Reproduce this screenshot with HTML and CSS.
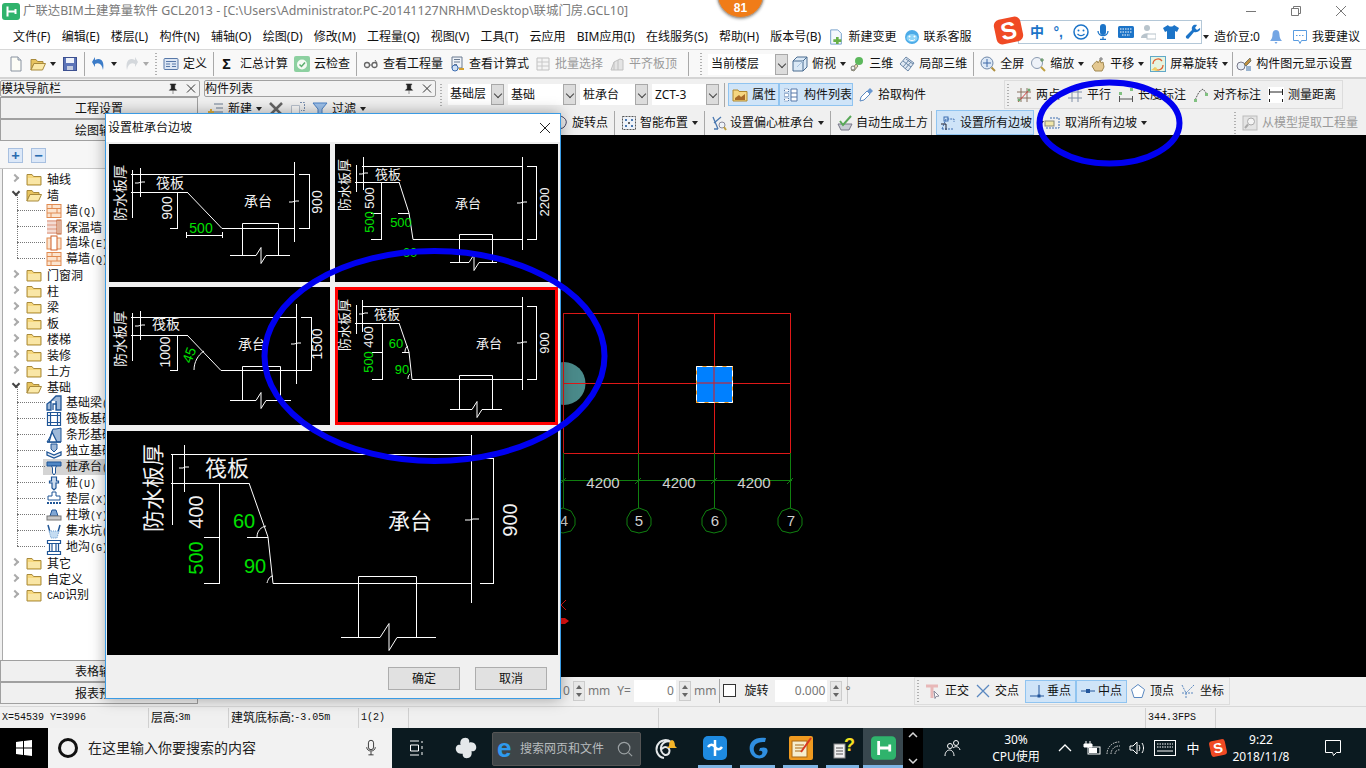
FILE: index.html
```html
<!DOCTYPE html>
<html lang="zh-CN">
<head>
<meta charset="utf-8">
<title>广联达BIM土建算量软件 GCL2013</title>
<link rel="stylesheet" href="styles.css">
</head>
<body>
<svg class="defs" width="0" height="0">
<defs>
<symbol id="folder" viewBox="0 0 16 16"><path d="M1 3.500h5l1.500 2H15v8.500H1z" fill="#f6d77c" stroke="#a88a3c"/><path d="M2 7h12v6H2z" fill="#f9e6a6"/></symbol>
<symbol id="folderopen" viewBox="0 0 16 16"><path d="M1 3.500h5l1.500 2H13v2H4L1 14z" fill="#e8c45f" stroke="#a88a3c"/><path d="M4 7.500h11.500L12.500 14H1z" fill="#fbe9a8" stroke="#a88a3c"/></symbol>
<symbol id="brick" viewBox="0 0 16 16"><rect x="1" y="1.500" width="14" height="13" fill="#fbe4cf" stroke="#e08a50"/><path d="M1 5.500h14M1 10h14M6 1.500v4M11 5.500V10M5 10v4.500" fill="none" stroke="#e08a50"/></symbol>
<symbol id="insul" viewBox="0 0 16 16"><rect x="1" y="1" width="10" height="14" fill="#e8b8a8"/><path d="M1 4h10M1 8h10M1 12h10" stroke="#fff"/><rect x="11" y="1" width="4" height="14" fill="#fff" stroke="#c06030"/><path d="M13 1v14" stroke="#c06030"/></symbol>
<symbol id="pier" viewBox="0 0 16 16"><rect x="1" y="3" width="14" height="11" fill="#fbe4cf" stroke="#e08a50"/><rect x="5" y="1" width="6" height="14" fill="#fff" stroke="#d0602a"/></symbol>
<symbol id="fbeam" viewBox="0 0 16 16"><path d="M1 15V9l4-3v9zM5 6l5-5h5v14h-5V6" fill="#9fb9d8" stroke="#1f5596" stroke-width="1.300"/><path d="M7 15V9h3v6" fill="#fff" stroke="#1f5596" stroke-width="1.300"/></symbol>
<symbol id="raft" viewBox="0 0 16 16"><path d="M1.500 1.500h13v13h-13z M4.500 4.500h7v7h-7z M1.500 4.500h13M1.500 11.500h13M4.500 1.500v13M11.500 1.500v13" fill="none" stroke="#1f5596" stroke-width="1.200"/></symbol>
<symbol id="strip" viewBox="0 0 16 16"><path d="M1 15l3-5 3-8 3 0 5-1v14z" fill="#9fb9d8" stroke="#1f5596"/><path d="M1 15h14M6 5l-3 10h8z" fill="#fff" stroke="#1f5596" stroke-width="1.300"/></symbol>
<symbol id="indep" viewBox="0 0 16 16"><path d="M5 1h6v5l-3 3-3-3z" fill="#9fb9d8" stroke="#1f5596"/><path d="M1 9l7 3 7-3v3l-7 3-7-3z" fill="#e8eef6" stroke="#1f5596" stroke-width="1.300"/></symbol>
<symbol id="cap" viewBox="0 0 16 16"><path d="M1 3h14v4H1z" fill="#4f86c4" stroke="#1f5596"/><path d="M5.500 7h5l-1 2v5l-1.500 2-1.500-2V9z" fill="#fff" stroke="#1f5596"/></symbol>
<symbol id="pile" viewBox="0 0 16 16"><path d="M5.500 2h5v4h2v2h-2.500v5L8 15l-2-2V8H3.500V6h2z" fill="#cddcee" stroke="#1f5596" stroke-width="1.200"/></symbol>
<symbol id="cushion" viewBox="0 0 16 16"><path d="M6 1h4v4h4v4H2V5h4z" fill="#fff" stroke="#1f5596"/><path d="M1 12h14" stroke="#1f5596" stroke-dasharray="2 1" stroke-width="2"/></symbol>
<symbol id="pier2" viewBox="0 0 16 16"><path d="M6 3h4l2 6H4z" fill="#7fa6d4" stroke="#1f5596"/><rect x="1" y="9" width="14" height="4" fill="#c8c8c8" stroke="#777"/></symbol>
<symbol id="pit" viewBox="0 0 16 16"><path d="M2 2l2 7h8l2-7" fill="none" stroke="#1f5596" stroke-width="1.500"/><path d="M3 8h10l-2 7H5z" fill="#c4dcf2" stroke="#6a9cd0" stroke-dasharray="1 1"/></symbol>
<symbol id="trench" viewBox="0 0 16 16"><path d="M1.500 1.500h13v3h-13zM3.500 4.500v8M12.500 4.500v8M6 4.500v8M10 4.500v8M1.500 12.500h13v3h-13z" fill="none" stroke="#1f5596" stroke-width="1.200"/></symbol>
<symbol id="page" viewBox="0 0 16 16"><path d="M3 1h7l3 3v11H3z" fill="#fdfdf6" stroke="#8892a0"/><path d="M10 1v3h3" fill="#dfe6ee" stroke="#8892a0"/></symbol>
<symbol id="floppy" viewBox="0 0 16 16"><rect x="1.500" y="1.500" width="13" height="13" fill="#5c74b8" stroke="#3c5090"/><rect x="4" y="2" width="8" height="5" fill="#eef2fa"/><rect x="5" y="10" width="6" height="4" fill="#c4cce0"/></symbol>
<symbol id="undo" viewBox="0 0 16 16"><path d="M4 4c5-3 10 0 8 10-1-6-4-8-8-6v3L1 6l3-5z" fill="#3c7cc8"/></symbol>
<symbol id="redo" viewBox="0 0 16 16"><path d="M12 4C7 1 2 4 4 14c1-6 4-8 8-6v3l3-5-3-5z" fill="#d4d8dc"/></symbol>
<symbol id="table" viewBox="0 0 16 16"><rect x="1" y="2.500" width="14" height="11" rx="1" fill="#dce6f4" stroke="#5878a8"/><path d="M3 5.500h10M3 8h4M9 8h4M3 10.500h4M9 10.500h4" stroke="#5878a8"/></symbol>
<symbol id="cloud" viewBox="0 0 16 16"><rect width="16" height="16" rx="2" fill="#8cd0a0"/><circle cx="8" cy="8.500" r="5" fill="#f4fbf4"/><path d="M5.500 8.500L7.500 10.500 11 6.500" fill="none" stroke="#5cb070" stroke-width="1.500"/></symbol>
<symbol id="glasses" viewBox="0 0 16 16"><circle cx="4" cy="9" r="2.500" fill="none" stroke="#666" stroke-width="1.300"/><circle cx="11.500" cy="9" r="2.500" fill="none" stroke="#666" stroke-width="1.300"/><path d="M6.500 9h2.500M12 4l2 3" stroke="#666"/></symbol>
<symbol id="calc" viewBox="0 0 16 16"><path d="M3 1h10v11H3z" fill="#eef2f8" stroke="#6a7a90"/><path d="M5 3.500h6M5 6h6M5 8.500h3" stroke="#6a7a90"/><circle cx="6" cy="12" r="3" fill="#cfe0f4" stroke="#3c6cb0"/><path d="M10 13h5" stroke="#d4a030" stroke-width="2"/></symbol>
<symbol id="batch" viewBox="0 0 16 16"><path d="M2 2h12v12H2z" fill="#f4f4f4" stroke="#c0c0c0"/><path d="M2 6h12M2 10h12M7 2v12" stroke="#c8c8c8"/></symbol>
<symbol id="flat" viewBox="0 0 16 16"><path d="M2 14l3-8 6-3 3 1v10z" fill="#e4e4e4" stroke="#c0c0c0"/><path d="M5 6v8M9 4v10" stroke="#c0c0c0"/></symbol>
<symbol id="cube" viewBox="0 0 16 16"><path d="M1 5l4-4h10v10l-4 4H1z" fill="#dbe9f6" stroke="#4a6c90"/><path d="M1 5h10v10M11 5l4-4" fill="none" stroke="#4a6c90"/><path d="M5 11l6-6" stroke="#a8c4e0"/></symbol>
<symbol id="threed" viewBox="0 0 16 16"><circle cx="10" cy="5" r="4" fill="#5cb85c"/><path d="M2 14L7 8l2 2-4 5z" fill="#e8d8b0" stroke="#887"/><circle cx="4" cy="12" r="2" fill="#f4f4f4" stroke="#777"/></symbol>
<symbol id="local3d" viewBox="0 0 16 16"><path d="M1 8l6-7 8 6-6 8z" fill="#dfe8f2" stroke="#6c88a8"/><path d="M4 5l8 6M7 3l7 5M4 11l6-7M6 13l6-7" stroke="#6c88a8"/></symbol>
<symbol id="zoomall" viewBox="0 0 16 16"><circle cx="7" cy="7" r="6" fill="#dce8f6" stroke="#7088a8"/><path d="M7 3v8M3 7h8" stroke="#3c68a8"/><path d="M11.500 11.500L15 15" stroke="#b09040" stroke-width="2"/></symbol>
<symbol id="zoomm" viewBox="0 0 16 16"><circle cx="7" cy="7" r="5.500" fill="#eef2f8" stroke="#8a9ab0"/><path d="M11 11l4 4" stroke="#c0a040" stroke-width="2"/><path d="M12 2v4M10 4h4" stroke="#558855"/></symbol>
<symbol id="hand" viewBox="0 0 16 16"><path d="M2 10c2-2 3-4 5-5l1 2 2-3 1 3 2-1 1 5-2 4H5z" fill="#e4c890" stroke="#a08850"/><path d="M11 1v4M9 3h4" stroke="#777"/></symbol>
<symbol id="rotate" viewBox="0 0 16 16"><rect x=".5" y=".5" width="15" height="15" fill="#e6f4e0" stroke="#60a8c8"/><path d="M3 8a5 5 0 0 1 9-3M13 9a5 5 0 0 1-9 3" fill="none" stroke="#e06030" stroke-width="1.300"/><path d="M1 14l5-3 2 4z" fill="#f0d060"/></symbol>
<symbol id="display" viewBox="0 0 16 16"><circle cx="5" cy="10" r="4" fill="#e8eef6" stroke="#778"/><path d="M8 8l6-6 1 3-5 5z" fill="#c09040" stroke="#776"/><path d="M10 10h5v5h-5z" fill="#9ab4d0"/></symbol>
<symbol id="newchg" viewBox="0 0 16 18"><path d="M2 1h8l4 4v12H2z" fill="#f4f8fd" stroke="#6c9ac8"/><path d="M8 9h3v2.500h3v3h-3V17H8v-2.500H5v-3h3z" fill="#68b048"/></symbol>
<symbol id="service" viewBox="0 0 16 16"><circle cx="8" cy="8" r="7" fill="#4cabe8"/><ellipse cx="8" cy="9" rx="5.500" ry="4" fill="#8cd4f8"/><circle cx="5.500" cy="7.500" r="1" fill="#fff"/><circle cx="10.500" cy="7.500" r="1" fill="#fff"/><path d="M5 10.500c2 1.500 4 1.500 6 0" fill="none" stroke="#fff"/></symbol>
<symbol id="bell" viewBox="0 0 16 16"><path d="M8 1c-3 0-3.500 3-3.500 5 0 3-1.500 5-2.500 6h12c-1-1-2.500-3-2.500-6 0-2-.5-5-3.500-5z" fill="#74a6e4"/><path d="M6.500 13h3l-1.500 2z" fill="#74a6e4"/></symbol>
<symbol id="msg" viewBox="0 0 16 16"><path d="M1.500 1.500h13v10h-5l-1.500 3-1.500-3h-5z" fill="#fff" stroke="#5a9ce0"/><path d="M4 6.500h1.500M7 6.500h1.500M10 6.500h1.500" stroke="#5a9ce0"/></symbol>
<symbol id="attr" viewBox="0 0 16 16"><path d="M1 3h5l1 1.500h8V14H1z" fill="#f6d680" stroke="#b08830"/><path d="M3 11l4-3 2 2 4-3v6H3z" fill="#a86a28"/></symbol>
<symbol id="list" viewBox="0 0 16 16"><path d="M1.500 2h4v3h-4zM1.500 6.500h4v3h-4zM1.500 11h4v3h-4z" fill="#fff" stroke="#5878a8" stroke-dasharray="1 1"/><path d="M8 2h6v12H8zM8 6h6M8 10h6" fill="#fff" stroke="#5878a8"/></symbol>
<symbol id="pick" viewBox="0 0 16 16"><path d="M2 14l1-4 6-6 3 3-6 6z" fill="#fff" stroke="#5a88c0"/><path d="M9 4l3-3 3 3-3 3z" fill="#6a98d0"/></symbol>
<symbol id="twopt" viewBox="0 0 16 16"><path d="M1 5h14M1 11h14M5 1v14M11 1v14" stroke="#8a7060" fill="none"/><path d="M2 15L14 2" stroke="#d04040"/><circle cx="13" cy="3" r="1.500" fill="#70a870"/><circle cx="3" cy="13" r="1.500" fill="#70a870"/></symbol>
<symbol id="para" viewBox="0 0 16 16"><path d="M1 5h14M1 11h14M5 1v14M11 1v14" stroke="#8090a8" fill="none"/></symbol>
<symbol id="lendim" viewBox="0 0 16 16"><path d="M1 12h14M1.500 9v6M14.500 9v6" stroke="#555" fill="none"/><rect x="1" y="5" width="3" height="3" fill="#80c080"/><rect x="12" y="1" width="3" height="3" fill="#80c080"/></symbol>
<symbol id="aligndim" viewBox="0 0 16 16"><path d="M2 13l4-8 4-3 4 5" stroke="#555" stroke-dasharray="2 1" fill="none"/><rect x="1" y="12" width="3" height="3" fill="#80c080"/><rect x="12" y="6" width="3" height="3" fill="#80c080"/></symbol>
<symbol id="measure" viewBox="0 0 16 16"><rect y="0" width="16" height="16" fill="#fff"/><path d="M1.500 2v6M14.500 2v6M1.500 5h13" stroke="#222" fill="none"/><path d="M1.500 12v3M14.500 12v3" stroke="#222"/></symbol>
<symbol id="rot" viewBox="0 0 16 16"><path d="M3 3a6 6 0 1 1 2 10" fill="none" stroke="#446"/></symbol>
<symbol id="smart" viewBox="0 0 16 16"><rect x="1.500" y="1.500" width="13" height="13" fill="#eef2f8" stroke="#555" stroke-dasharray="2 1"/><rect x="4" y="4" width="2" height="2" fill="#4a78b0"/><rect x="10" y="4" width="2" height="2" fill="#4a78b0"/><rect x="4" y="10" width="2" height="2" fill="#4a78b0"/><rect x="10" y="10" width="2" height="2" fill="#4a78b0"/><circle cx="8" cy="8" r="1" fill="#333"/></symbol>
<symbol id="offset" viewBox="0 0 16 16"><path d="M2 2l5 12M10 2L3 8M3 14h4" stroke="#4a78b0" fill="none" stroke-width="1.300"/><circle cx="11" cy="10" r="3" fill="#eef2f8" stroke="#889"/><path d="M13 12l2 3" stroke="#c0a040" stroke-width="2"/></symbol>
<symbol id="auto" viewBox="0 0 16 16"><path d="M1 9h14l-3 6H4z" fill="#c8ccd4" stroke="#778"/><path d="M3 6l3 4 8-9" fill="none" stroke="#58a858" stroke-width="2"/></symbol>
<symbol id="slope" viewBox="0 0 16 16"><path d="M2 14L6 4h8v3M2 14h12" fill="none" stroke="#3c6cb0" stroke-dasharray="2 1"/><path d="M1 9h5v6" fill="none" stroke="#223"/><rect x="4" y="2" width="4" height="4" fill="none" stroke="#3c6cb0"/></symbol>
<symbol id="noslope" viewBox="0 0 16 16"><path d="M6 3h9v10H2" fill="none" stroke="#3c6cb0" stroke-dasharray="2 1"/><rect x="1" y="6" width="9" height="5" fill="#f0e6a8" stroke="#887"/></symbol>
<symbol id="extract" viewBox="0 0 16 16"><rect x="1" y="1" width="14" height="14" fill="#e4e4e4" stroke="#bbb"/><circle cx="9" cy="6.500" r="3.500" fill="#f4f4f4" stroke="#aaa"/><path d="M6 9.500L3 13" stroke="#aaa" stroke-width="2"/></symbol>
<symbol id="ortho" viewBox="0 0 16 16"><path d="M1 3h12M7 3v12" stroke="#e8b8b8" stroke-width="3" fill="none"/><path d="M9 8l5 5-3 .5-1 2z" fill="#fff" stroke="#889"/></symbol>
<symbol id="cross" viewBox="0 0 16 16"><path d="M2 2l12 12M14 2L2 14" stroke="#5a88c0" stroke-width="1.300"/></symbol>
<symbol id="del" viewBox="0 0 16 16"><path d="M2 2l12 12M14 2L2 14" stroke="#666" stroke-width="2.500"/></symbol>
<symbol id="newitem" viewBox="0 0 16 16"><path d="M6 3h9M8 7h7M6 11h9" stroke="#6a7a90" fill="none"/><path d="M3 8v6M0 11h6" stroke="#e0b040" stroke-width="2"/></symbol>
<symbol id="copy" viewBox="0 0 16 16"><path d="M1.500 4.500h8v10h-8z" fill="#f8f8f8" stroke="#b8c0cc"/><path d="M10 1.500h4.500v8H11" fill="none" stroke="#7a90b0" stroke-dasharray="2 1"/></symbol>
<symbol id="funnel" viewBox="0 0 16 16"><path d="M1 2h14l-5 6v7l-4-2V8z" fill="#9cc0ea" stroke="#4a80c4"/></symbol>
<symbol id="perp" viewBox="0 0 16 16"><path d="M1 13h14M10 2v11" stroke="#23569c"/><rect x="8.500" y="11.500" width="3" height="3" fill="#23569c"/></symbol>
<symbol id="mid" viewBox="0 0 16 16"><path d="M1 8h14" stroke="#23569c"/><rect x="6" y="6" width="4" height="4" fill="#23569c"/></symbol>
<symbol id="vertex" viewBox="0 0 16 16"><path d="M8 1.500l6.500 5-2.500 8H4l-2.500-8z" fill="#fff" stroke="#5a88c0"/></symbol>
<symbol id="coord" viewBox="0 0 16 16"><path d="M2 2l4 8v5M14 2l-8 8M2 10h12" stroke="#5a88c0" stroke-dasharray="2 1" fill="none"/></symbol>
<symbol id="glodon" viewBox="0 0 18 17"><rect width="18" height="17" rx="3" fill="#2fb36c"/><path d="M5.500 3.500v10M5.500 8.500h8M13.500 6v5" fill="none" stroke="#fff" stroke-width="2"/></symbol>
</defs>
</svg>

<div class="app">
  <header class="titlebar">
    <svg class="appicon"><use href="#glodon"/></svg>
    <span class="apptitle">广联达BIM土建算量软件 GCL2013 - [C:\Users\Administrator.PC-20141127NRHM\Desktop\联城门房.GCL10]</span>
    <span class="winbtns">
      <svg class="wb" viewBox="0 0 12 12"><path d="M1 6.500h10" stroke="#777"/></svg>
      <svg class="wb" viewBox="0 0 12 12"><path d="M1.500 3.500h7v7h-7zM3.500 3.500v-2h7v7h-2" fill="none" stroke="#777"/></svg>
      <svg class="wb" viewBox="0 0 12 12"><path d="M1 1l10 10M11 1L1 11" stroke="#777"/></svg>
    </span>
  </header>

  <nav class="menubar">
    <span>文件(F)</span><span>编辑(E)</span><span>楼层(L)</span><span>构件(N)</span><span>辅轴(O)</span><span>绘图(D)</span><span>修改(M)</span><span>工程量(Q)</span><span>视图(V)</span><span>工具(T)</span><span>云应用</span><span>BIM应用(I)</span><span>在线服务(S)</span><span>帮助(H)</span><span>版本号(B)</span>
    <span class="it mextra"><svg class="ic"><use href="#newchg"/></svg>新建变更</span>
    <span class="it mextra"><svg class="ic"><use href="#service"/></svg>联系客服</span>
    <span class="menuright">
      <i class="ar"></i><span>造价豆:0</span>
      <svg class="ic bellic"><use href="#bell"/></svg>
      <span class="it"><svg class="ic"><use href="#msg"/></svg>我要建议</span>
    </span>
  </nav>

  <div class="toolbar">
    <svg class="ic"><use href="#page"/></svg>
    <svg class="ic"><use href="#folderopen"/></svg><i class="ar"></i>
    <svg class="ic"><use href="#floppy"/></svg>
    <i class="sep"></i>
    <svg class="ic"><use href="#undo"/></svg><i class="ar"></i>
    <svg class="ic"><use href="#redo"/></svg><i class="ar off"></i>
    <i class="grip"></i>
    <span class="it"><svg class="ic"><use href="#table"/></svg>定义</span>
    <i class="sep"></i>
    <span class="it"><b class="sigma">Σ</b>汇总计算</span>
    <span class="it"><svg class="ic"><use href="#cloud"/></svg>云检查</span>
    <i class="sep"></i>
    <span class="it"><svg class="ic"><use href="#glasses"/></svg>查看工程量</span>
    <span class="it"><svg class="ic"><use href="#calc"/></svg>查看计算式</span>
    <span class="it dim"><svg class="ic"><use href="#batch"/></svg>批量选择</span>
    <span class="it dim"><svg class="ic"><use href="#flat"/></svg>平齐板顶</span>
    <i class="sep wide"></i>
    <i class="grip"></i>
    <span class="combo big"><span class="cv">当前楼层</span><i class="cb"></i></span>
    <span class="it"><svg class="ic"><use href="#cube"/></svg>俯视</span><i class="ar"></i>
    <span class="it tight"><svg class="ic"><use href="#threed"/></svg>三维</span>
    <span class="it"><svg class="ic"><use href="#local3d"/></svg>局部三维</span>
    <i class="sep"></i>
    <span class="it"><svg class="ic"><use href="#zoomall"/></svg>全屏</span>
    <span class="it"><svg class="ic"><use href="#zoomm"/></svg>缩放</span><i class="ar"></i>
    <span class="it"><svg class="ic"><use href="#hand"/></svg>平移</span><i class="ar"></i>
    <span class="it"><svg class="ic"><use href="#rotate"/></svg>屏幕旋转</span><i class="ar"></i>
    <i class="sep last"></i>
    <span class="it"><svg class="ic"><use href="#display"/></svg>构件图元显示设置</span>
  </div>

  <div class="workspace">
    <aside class="nav">
      <div class="phead"><span>模块导航栏</span><span class="pctl"><svg class="pin" viewBox="0 0 10 12"><path d="M2 1h6v1H7v4l2 2H1l2-2V2H2zM5 8v4" fill="#222" stroke="#222" stroke-width=".5"/></svg><svg class="pin" viewBox="0 0 10 10"><path d="M1 1l8 8M9 1L1 9" stroke="#333"/></svg></span></div>
      <button class="navbtn">工程设置</button>
      <button class="navbtn">绘图输入</button>
      <div class="treetools"><span class="tt">+</span><span class="tt">−</span></div>
      <ul class="tree">
        <li><i class="chev"></i><svg class="fi"><use href="#folder"/></svg>轴线</li>
        <li><i class="chev open"></i><svg class="fi"><use href="#folderopen"/></svg>墙</li>
        <li class="child"><svg class="fi"><use href="#brick"/></svg><span>墙<span class="mono">(Q)</span></span></li>
        <li class="child"><svg class="fi"><use href="#insul"/></svg>保温墙</li>
        <li class="child"><svg class="fi"><use href="#pier"/></svg><span>墙垛<span class="mono">(E)</span></span></li>
        <li class="child"><svg class="fi"><use href="#brick"/></svg><span>幕墙<span class="mono">(Q)</span></span></li>
        <li><i class="chev"></i><svg class="fi"><use href="#folder"/></svg>门窗洞</li>
        <li><i class="chev"></i><svg class="fi"><use href="#folder"/></svg>柱</li>
        <li><i class="chev"></i><svg class="fi"><use href="#folder"/></svg>梁</li>
        <li><i class="chev"></i><svg class="fi"><use href="#folder"/></svg>板</li>
        <li><i class="chev"></i><svg class="fi"><use href="#folder"/></svg>楼梯</li>
        <li><i class="chev"></i><svg class="fi"><use href="#folder"/></svg>装修</li>
        <li><i class="chev"></i><svg class="fi"><use href="#folder"/></svg>土方</li>
        <li><i class="chev open"></i><svg class="fi"><use href="#folderopen"/></svg>基础</li>
        <li class="child"><svg class="fi"><use href="#fbeam"/></svg><span>基础梁<span class="mono">(F)</span></span></li>
        <li class="child"><svg class="fi"><use href="#raft"/></svg><span>筏板基础<span class="mono">(M)</span></span></li>
        <li class="child"><svg class="fi"><use href="#strip"/></svg><span>条形基础<span class="mono">(T)</span></span></li>
        <li class="child"><svg class="fi"><use href="#indep"/></svg><span>独立基础<span class="mono">(D)</span></span></li>
        <li class="child cur"><svg class="fi"><use href="#cap"/></svg><span>桩承台<span class="mono">(V)</span></span></li>
        <li class="child"><svg class="fi"><use href="#pile"/></svg><span>桩<span class="mono">(U)</span></span></li>
        <li class="child"><svg class="fi"><use href="#cushion"/></svg><span>垫层<span class="mono">(X)</span></span></li>
        <li class="child"><svg class="fi"><use href="#pier2"/></svg><span>柱墩<span class="mono">(Y)</span></span></li>
        <li class="child"><svg class="fi"><use href="#pit"/></svg><span>集水坑<span class="mono">(K)</span></span></li>
        <li class="child"><svg class="fi"><use href="#trench"/></svg><span>地沟<span class="mono">(G)</span></span></li>
        <li><i class="chev"></i><svg class="fi"><use href="#folder"/></svg>其它</li>
        <li><i class="chev"></i><svg class="fi"><use href="#folder"/></svg>自定义</li>
        <li><i class="chev"></i><svg class="fi"><use href="#folder"/></svg><span><span class="mono">CAD</span>识别</span></li>
      </ul>
      <button class="navbtn">表格输入</button>
      <button class="navbtn">报表预览</button>
    </aside>

    <aside class="list">
      <div class="phead"><span>构件列表</span><span class="pctl"><svg class="pin" viewBox="0 0 10 12"><path d="M2 1h6v1H7v4l2 2H1l2-2V2H2zM5 8v4" fill="#222" stroke="#222" stroke-width=".5"/></svg><svg class="pin" viewBox="0 0 10 10"><path d="M1 1l8 8M9 1L1 9" stroke="#333"/></svg></span></div>
      <div class="listtools">
        <span class="it"><svg class="ic"><use href="#newitem"/></svg>新建</span><i class="ar"></i>
        <svg class="ic"><use href="#del"/></svg>
        <svg class="ic"><use href="#copy"/></svg>
        <span class="it"><svg class="ic"><use href="#funnel"/></svg>过滤</span><i class="ar"></i>
      </div>
    </aside>

    <main class="main">
      <div class="rows">
        <div class="row1">
          <i class="grip"></i>
          <span class="label">基础层</span><i class="cb"></i>
          <span class="combo c2"><span class="cv">基础</span><i class="cb"></i></span>
          <span class="combo c3"><span class="cv">桩承台</span><i class="cb"></i></span>
          <span class="combo c4"><span class="cv">ZCT-3</span><i class="cb"></i></span>
          <i class="sep"></i>
          <span class="tog t1"><svg class="ic"><use href="#attr"/></svg>属性</span>
          <span class="tog t2"><svg class="ic"><use href="#list"/></svg>构件列表</span>
          <span class="it"><svg class="ic"><use href="#pick"/></svg>拾取构件</span>
          <div class="dimgroup">
            <i class="grip"></i>
            <span class="it"><svg class="ic"><use href="#twopt"/></svg>两点</span>
            <span class="it"><svg class="ic"><use href="#para"/></svg>平行</span>
            <span class="it"><svg class="ic"><use href="#lendim"/></svg>长度标注</span>
            <span class="it"><svg class="ic"><use href="#aligndim"/></svg>对齐标注</span>
            <span class="it"><svg class="ic"><use href="#measure"/></svg>测量距离</span>
          </div>
        </div>
        <div class="row2">
          <span class="it"><svg class="ic"><use href="#rot"/></svg>旋转点</span>
          <i class="sep"></i>
          <span class="it"><svg class="ic"><use href="#smart"/></svg>智能布置</span><i class="ar"></i>
          <i class="sep"></i>
          <span class="it"><svg class="ic"><use href="#offset"/></svg>设置偏心桩承台</span><i class="ar"></i>
          <i class="sep"></i>
          <span class="it"><svg class="ic"><use href="#auto"/></svg>自动生成土方</span>
          <i class="sep pre"></i>
          <span class="tog t3"><svg class="ic"><use href="#slope"/></svg>设置所有边坡</span><i class="ar"></i>
          <span class="it cancel"><svg class="ic"><use href="#noslope"/></svg>取消所有边坡</span><i class="ar"></i>
          <span class="extract"><i class="grip"></i><span class="it dim"><svg class="ic"><use href="#extract"/></svg>从模型提取工程量</span></span>
        </div>
      </div>

      <div class="canvas">
        <svg class="cad-svg" viewBox="437 135 929 542" width="929" height="542">
          <circle cx="564" cy="383.500" r="21.500" fill="#4a8a8a"/>
          <g class="rl">
            <path d="M563 313h227M563 383h227M563 453h227M563 313v140M638 313v140M714 313v140M790 313v140"/>
          </g>
          <g class="gl">
            <path d="M563 453v55M638 453v55M714 453v55M790 453v55M561 480.500h231"/>
            <path d="M560 484l6-6M635 484l6-6M711 484l6-6M787 484l6-6"/>
            <polygon points="563,508 571,511 575,518 575,525 571,531 563,533 555,531 551,525 551,518 555,511"/>
            <polygon points="639,508 647,511 651,518 651,525 647,531 639,533 631,531 627,525 627,518 631,511"/>
            <polygon points="714,508 722,511 726,518 726,525 722,531 714,533 706,531 702,525 702,518 706,511"/>
            <polygon points="790,508 798,511 802,518 802,525 798,531 790,533 782,531 778,525 778,518 782,511"/>
          </g>
          <text class="cadt" x="603" y="488">4200</text>
          <text class="cadt" x="679" y="488">4200</text>
          <text class="cadt" x="754" y="488">4200</text>
          <text class="cadt" x="564" y="526">4</text>
          <text class="cadt" x="639" y="526">5</text>
          <text class="cadt" x="715" y="526">6</text>
          <text class="cadt" x="791" y="526">7</text>
          <rect x="696.500" y="366.500" width="36" height="36" fill="#0080ff" stroke="#ffa020"/>
          <rect x="696.500" y="366.500" width="36" height="36" fill="none" stroke="#fff" stroke-dasharray="6 4"/>
          <path d="M714 367v35M697 383h35" stroke="#e01818" fill="none"/>
          <path d="M566 600l-5 5 5 5" stroke="#e01010" fill="none"/>
          <path d="M561 618h4l4 3-4 3h-4z" fill="#e01010"/>
        </svg>
      </div>

      <div class="snapbar">
        <div class="coordgroup">
          <span class="val">0</span><span class="spin"></span><span class="unit">mm</span><span class="unit uy">Y=</span>
          <span class="field f1">0</span><span class="spin"></span><span class="unit">mm</span>
          <i class="sep"></i><i class="check"></i><span>旋转</span>
          <span class="field f2">0.000</span><span class="spin"></span><span class="unit">°</span>
        </div>
        <div class="snapgroup">
          <i class="grip"></i>
          <span class="it"><svg class="ic"><use href="#ortho"/></svg>正交</span>
          <span class="it"><svg class="ic"><use href="#cross"/></svg>交点</span>
          <span class="tog t4"><svg class="ic"><use href="#perp"/></svg>垂点</span>
          <span class="tog t4"><svg class="ic"><use href="#mid"/></svg>中点</span>
          <span class="it"><svg class="ic"><use href="#vertex"/></svg>顶点</span>
          <span class="it"><svg class="ic"><use href="#coord"/></svg>坐标</span>
        </div>
      </div>
    </main>
  </div>

  <footer class="status">
    <span class="s1 mono">X=54539 Y=3996</span>
    <span class="s2">层高:<span class="mono">3m</span></span>
    <span class="s3">建筑底标高:<span class="mono">-3.05m</span></span>
    <span class="s4 mono">1(2)</span>
    <span class="s5"></span>
    <span class="s6"></span>
    <span class="s7 mono">344.3FPS</span>
    <span class="s8"></span>
  </footer>

  <div class="taskbar">
    <span class="startbtn"><svg width="18" height="18" viewBox="0 0 18 18"><path d="M1 3l7-1v6.500H1zM9 2l8-1v7.500H9zM1 9.500h7V16l-7-1zM9 9.500h8V17l-8-1z" fill="#fff"/></svg></span>
    <span class="searchbox">
      <i class="cortana"></i>
      <span class="stext">在这里输入你要搜索的内容</span>
      <svg class="mic" viewBox="0 0 14 20"><rect x="4" y="1" width="6" height="11" rx="3" fill="none" stroke="#222"/><path d="M2 9c0 6 10 6 10 0M7 14v4M4 18h6" fill="none" stroke="#222"/></svg>
    </span>
    <span class="tcell c50"><svg width="16" height="16" viewBox="0 0 16 16"><path d="M1 1h9M1 15h9M1.500 5h8v6h-8zM13 1v2M13 6v3M13 12v3" fill="none" stroke="#fff"/></svg></span>
    <span class="tcell c48"><svg width="24" height="24" viewBox="0 0 24 24"><path d="M12 12C7 12 5 8 7 4c2-3 7-3 8 0 1 2-1 6-3 8zM12 12c0-5 4-7 8-5 3 2 3 7 0 8-2 1-6-1-8-3zM12 12c5 0 7 4 5 8-2 3-7 3-8 0-1-2 1-6 3-8zM12 12c0 5-4 7-8 5-3-2-3-7 0-8 2-1 6 1 8 3z" fill="#e4e8ea"/></svg></span>
    <span class="iesearch"><b class="ie">e</b><span class="iet">搜索网页和文件</span><svg class="mag" viewBox="0 0 18 18"><circle cx="8" cy="8" r="6.500" fill="none" stroke="#9aa0a2" stroke-width="1.300"/><path d="M13 13l4 4" stroke="#9aa0a2" stroke-width="1.300"/></svg></span>
    <span class="tcell c48"><svg width="28" height="24" viewBox="0 0 28 24"><path d="M13 22A9 9 0 1 1 20 6a7 7 0 1 0-6 13 4 4 0 1 0-3-6" fill="none" stroke="#e4e8ea" stroke-width="2"/><path d="M18 10c0-8 6-8 6 0l2 2h-10z" fill="#f4b428"/></svg></span>
    <span class="tapp a1"><svg width="24" height="24" viewBox="0 0 24 24"><rect width="24" height="24" rx="5" fill="#1e8ae0"/><path d="M12 4v16M5 11c2-3 5-3 7 0s5 3 7 0" fill="none" stroke="#fff" stroke-width="2.500"/></svg></span>
    <span class="tapp a2"><svg width="24" height="26" viewBox="0 0 24 26"><path d="M20 3C8 1 2 8 4 16s12 10 16 4 0-9-6-7l-1 3c3-1 4 1 3 3-2 3-7 1-8-3S9 6 19 7z" fill="#2f8ee0"/></svg></span>
    <span class="tapp a3"><svg width="24" height="24" viewBox="0 0 24 24"><rect width="24" height="24" rx="2" fill="#ef9a20"/><rect x="3" y="5" width="15" height="16" fill="#f6eecf" stroke="#a86818"/><path d="M6 9h9M6 12h9M6 15h6" stroke="#a86818"/><path d="M12 16L22 2" stroke="#d83820" stroke-width="2"/></svg></span>
    <span class="tapp a4"><svg width="24" height="24" viewBox="0 0 24 24"><rect x="3" y="8" width="11" height="14" fill="#f0f0f0" stroke="#888"/><path d="M5 12h7M5 15h7M5 18h7" stroke="#555"/><text class="qm" x="13" y="15">?</text></svg></span>
    <span class="tapp a5 act"><svg class="appbig"><use href="#glodon"/></svg></span>
    <span class="tscroll"><svg width="10" height="36" viewBox="0 0 10 36"><path d="M1 7l4-4 4 4M1 29l4 4 4-4" fill="none" stroke="#d8d8d8" stroke-width="1.500"/></svg></span>
    <span class="tcell t60"><svg width="18" height="18" viewBox="0 0 18 18"><circle cx="12" cy="4" r="2.500" fill="none" stroke="#fff"/><circle cx="6" cy="7" r="2.500" fill="none" stroke="#fff"/><path d="M1 17c0-8 9-8 9 0M9 9c2-2 6-2 7 2" fill="none" stroke="#fff"/></svg></span>
    <span class="tcell t66 cpu"><span>30%</span><span>CPU使用</span></span>
    <span class="tcell t32"><svg width="14" height="8" viewBox="0 0 14 8"><path d="M1 7l6-6 6 6" fill="none" stroke="#fff" stroke-width="1.300"/></svg></span>
    <span class="tcell t22"><svg width="18" height="16" viewBox="0 0 18 16"><path d="M3 1v3M7 1v3M1 4h8v3H1z" stroke="#fff" fill="#fff"/><rect x="5" y="7" width="12" height="7" fill="none" stroke="#fff"/><rect x="6" y="8" width="8" height="5" fill="#fff"/></svg></span>
    <span class="tcell t22"><svg width="16" height="14" viewBox="0 0 16 14"><path d="M1 13A12 12 0 0 1 14 1M5 13A8 8 0 0 1 14 5M9 13a4 4 0 0 1 5-4" fill="none" stroke="#ddd" stroke-dasharray="1.500 1"/></svg></span>
    <span class="tcell t24"><svg width="16" height="16" viewBox="0 0 16 16"><path d="M1 6h3l4-4v12l-4-4H1z" fill="none" stroke="#fff"/><path d="M10 5c1 2 1 4 0 6M13 3c2 3 2 7 0 10" fill="none" stroke="#fff"/></svg></span>
    <span class="tcell t32"><svg width="22" height="16" viewBox="0 0 22 16"><rect x=".5" y=".5" width="21" height="15" fill="none" stroke="#fff"/><path d="M3 4h16M3 7h16" stroke="#fff" stroke-dasharray="1.500 1"/><path d="M3 11h16" stroke="#fff"/></svg></span>
    <span class="tcell t24 zh">中</span>
    <span class="tcell t26"><span class="slogo small">S</span></span>
    <span class="tcell t60 clock"><span>9:22</span><span>2018/11/8</span></span>
    <span class="tcell notif"><svg width="18" height="18" viewBox="0 0 18 18"><path d="M1.500 1.500h15v12h-4l-3 3-1-3h-7z" fill="none" stroke="#fff"/></svg></span>
  </div>

  <!-- floating badge -->
  <div class="badge">81</div>

  <!-- input-method bar -->
  <div class="ime">
    <span class="slogo">S</span>
    <div class="imebar">
      <b class="imez">中</b>
      <b class="imep">°,</b>
      <svg class="im" viewBox="0 0 16 16"><circle cx="8" cy="8" r="7" fill="none" stroke="#1c74c8" stroke-width="1.500"/><circle cx="5.500" cy="6.500" r="1" fill="#1c74c8"/><circle cx="10.500" cy="6.500" r="1" fill="#1c74c8"/><path d="M4.500 10c2 2 5 2 7 0" fill="none" stroke="#1c74c8" stroke-width="1.300"/></svg>
      <svg class="im" viewBox="0 0 16 16"><rect x="5" y="0" width="6" height="11" rx="3" fill="#1c74c8"/><path d="M3 7c0 6 10 6 10 0M8 13v2M5 15.500h6" fill="none" stroke="#1c74c8" stroke-width="1.300"/></svg>
      <svg class="im" viewBox="0 0 16 16"><rect y="2" width="16" height="12" rx="1.500" fill="#1c74c8"/><path d="M2 5h12M2 8h12M4 11h8" stroke="#fff" stroke-dasharray="1.500 1"/></svg>
      <svg class="im" viewBox="0 0 16 16"><circle cx="7" cy="4" r="3" fill="#b8c4cc"/><path d="M1 14c0-6 11-6 11 0z" fill="#b8c4cc"/><rect x="7" y="10" width="9" height="5" fill="#fff" stroke="#b8c4cc"/></svg>
      <svg class="im" viewBox="0 0 16 16"><path d="M5 1L0 4l2 4 2-1v8h8V7l2 1 2-4-5-3c-1 2-5 2-6 0z" fill="#1c74c8"/></svg>
      <svg class="im" viewBox="0 0 16 16"><path d="M15 4l-3 2-2-2 2-3c-3-1-6 1-5 5L1 12c-1 2 2 4 3 2l5-6c4 1 7-2 6-4z" fill="#1c74c8"/></svg>
    </div>
  </div>

  <!-- modal dialog -->
  <section class="dialog">
    <div class="dtitle"><span>设置桩承台边坡</span><svg class="dclose" viewBox="0 0 12 12"><path d="M1 1l10 10M11 1L1 11" stroke="#222"/></svg></div>
    <div class="dgrid">
      <div class="panel">
        <svg class="dw" viewBox="0 0 221 138" width="221" height="138">
          <path d="M22 30.500h163M22 48.500h56M78 48L113 84.500H185M23.500 26v48M31.500 24v29M26 39h3l4-1h3M185.500 18v80M180 58h3l4-1h3M200.500 30v54M190 30.500h11M190 84.500h11M68.500 48v36M61 84.500h8M77.500 88v6M77 91.500h36M113.500 88v6M133.500 111V79.500H169.500V111M121 111.500h26l5-8v16l5-8h24"/>
          <text class="wt rt f14" transform="translate(10 49) rotate(-90)">防水板厚</text>
          <text class="wt f14" x="61" y="44">筏板</text>
          <text class="wt f14" x="149" y="62">承台</text>
          <text class="wn rt f14" transform="translate(58 64) rotate(-90)">900</text>
          <text class="wn rt f14" transform="translate(208 58) rotate(-90)">900</text>
          <text class="gn f14" x="92" y="89">500</text>
        </svg>
      </div>
      <div class="panel">
        <svg class="dw" viewBox="0 0 223 138" width="223" height="138">
          <path d="M27 22.500H187M20 38.500H64M64 38L74 69 78 95.500H187M21.500 21v27M28.500 13v33M24 30h3l3-1h3M187.500 13v93M182 59h3l4-1h3M201.500 22v73M192 22.500h10M192 95.500h10M46.500 38v57M36 69.500h11M36 95.500h11M63 69.500h11M124.500 118V90.500H157.500V118M115 118.500h19l5-8v16l5-8h18"/>
          <text class="wt rt f13" transform="translate(8 41) rotate(-90)">防水板厚</text>
          <text class="wt f13" x="53" y="35">筏板</text>
          <text class="wt f13" x="133" y="64">承台</text>
          <text class="wn rt f13" transform="translate(34 54) rotate(-90)">500</text>
          <text class="gn rt f13" transform="translate(34 78) rotate(-90)">500</text>
          <text class="gn f13" x="66" y="83">500</text>
          <text class="gn f13" x="75" y="113">60</text>
          <text class="wn rt f13" transform="translate(209 58) rotate(-90)">2200</text>
        </svg>
      </div>
      <div class="panel">
        <svg class="dw" viewBox="0 0 221 138" width="221" height="138">
          <path d="M22 30.500H187M22 48.500H78M78 48L112 83.500H203M23.500 26v48M31.500 24v29M26 39h3l4-1h3M187.500 17v80M182 57h3l4-1h3M202.500 30v54M192 30.500h11M192 83.500h11M68.500 48v36M61 83.500h8M133.500 113V79.500H171.500V113M121 113.500h26l5-8v16l5-8h25"/>
          <path d="M85 83c0-8 4-15 10-19"/>
          <text class="wt rt f14" transform="translate(10 52) rotate(-90)">防水板厚</text>
          <text class="wt f14" x="57" y="42">筏板</text>
          <text class="wt f14" x="143" y="62">承台</text>
          <text class="wn rt f14" transform="translate(56 65) rotate(-90)">1000</text>
          <text class="wn rt f14" transform="translate(208 57) rotate(-90)">1500</text>
          <text class="gn rt f14" transform="translate(80 68) rotate(-70)">45</text>
        </svg>
      </div>
      <div class="panel sel">
        <svg class="dw" viewBox="0 0 223 138" width="223" height="138">
          <path d="M27 19.500H187M20 36.500H64M64 36L74 65 77 92.500H187M21.500 18v29M27.500 13v32M24 27h3l3-1h3M187.500 10v93M182 56h3l4-1h3M201.500 19v73M192 19.500h10M192 92.500h10M47.500 36v56M37 65.500h11M37 92.500h11M67 65.500h7M124.500 122V88.500H157.500V122M115 122.500h22l5-8v16l5-8h20"/>
          <path d="M70 65c0-3 1-5 3-6M73 92c0-3 1-4 2-5"/>
          <text class="wt rt f13" transform="translate(8 38) rotate(-90)">防水板厚</text>
          <text class="wt f13" x="52" y="32">筏板</text>
          <text class="wt f13" x="154" y="61">承台</text>
          <text class="wn rt f13" transform="translate(33 50) rotate(-90)">400</text>
          <text class="gn rt f13" transform="translate(33 75) rotate(-90)">500</text>
          <text class="gn f13" x="61" y="61">60</text>
          <text class="gn f13" x="67" y="87">90</text>
          <text class="wn rt f13" transform="translate(209 56) rotate(-90)">900</text>
        </svg>
      </div>
    </div>
    <div class="panel large">
      <svg class="dw" viewBox="0 0 451 224" width="451" height="224">
        <path d="M64 23.500H364M64 52.500H142M142 52L161 106 166 152.500H364M65.500 23v71M77.500 14v47M72 37h4l2-1h4M364.500 4v168M358 89h5l3-1h6M386.500 27v125M375 27.500h12M373 152.500h14M112.500 52v100M97 106.500h16M97 152.500h16M140 106.500h21M251.500 206V145.500H309.500V206M234 206.500h39l9-14v27l8-13h39"/>
        <path d="M150 106c0-6 4-10 9-11M160 152c1-4 3-7 6-7"/>
        <text class="wt rt f22" transform="translate(44 57) rotate(-90)">防水板厚</text>
        <text class="wt f22" x="120" y="45">筏板</text>
        <text class="wt f22" x="303" y="98">承台</text>
        <text class="wn rt f20" transform="translate(89 81) rotate(-90)">400</text>
        <text class="gn rt f20" transform="translate(89 127) rotate(-90)">500</text>
        <text class="gn f20" x="137" y="97">60</text>
        <text class="gn f20" x="148" y="142">90</text>
        <text class="wn rt f20" transform="translate(403 89) rotate(-90)">900</text>
      </svg>
    </div>
    <div class="dfoot"><button class="dbtn">确定</button><button class="dbtn">取消</button></div>
  </section>

  <!-- hand-drawn blue annotations over the screenshot -->
  <svg class="marks" viewBox="0 0 1366 768" width="1366" height="768">
    <ellipse cx="434.500" cy="356" rx="170" ry="105"/>
    <ellipse cx="1109.500" cy="123" rx="70" ry="40.500"/>
  </svg>
</div>
</body>
</html>
```

FILE: styles.css
```css
* { box-sizing: border-box; }
html, body { margin: 0; padding: 0; }
body {
  width: 1366px; height: 768px; overflow: hidden;
  font-family: "Noto Sans", "Noto Sans CJK SC", sans-serif;
  font-size: 12px; line-height: 16px; color: #111; background: #f0f0f0;
}
.defs { position: absolute; }
.app { position: relative; width: 1366px; height: 768px; overflow: hidden; display: flex; flex-direction: column; }
i { display: block; font-style: normal; flex: none; }
svg { display: block; flex: none; }

/* title */
.titlebar { height: 25px; background: #fff; display: flex; align-items: center; padding: 0 0 3px 2px; }
.appicon { width: 18px; height: 17px; }
.appbig { width: 25px; height: 24px; }
.apptitle { margin-left: 3px; color: #7a7a7a; white-space: nowrap; font-size: 12.4px; }
.winbtns { margin-left: auto; display: flex; gap: 33px; padding-right: 19px; }
.wb { width: 12px; height: 12px; }

/* menu */
.menubar { height: 25px; background: #fff; display: flex; align-items: center; gap: 11.2px; padding-left: 13px; border-bottom: 1px solid #d8d8d8; white-space: nowrap; }
.mextra { gap: 3px; margin-left: -4px; }
.mextra + .mextra { margin-left: -4px; }
.menuright { margin-left: auto; padding-right: 6px; display: flex; align-items: center; gap: 5px; }
.bellic { margin: 0 3px 0 3px; }
.it { display: flex; align-items: center; gap: 4px; white-space: nowrap; flex: none; }
.ic { width: 16px; height: 16px; }
.dim { color: #9a9a9a; }
.ar { width: 0; height: 0; border-left: 3.500px solid transparent; border-right: 3.500px solid transparent; border-top: 4px solid #222; margin-left: -2px; }
.ar.off { border-top-color: #aaa; }
.sep { width: 1px; height: 24px; background: #a8a8a8; }
.sep.wide { margin: 0 5px; }
.sep.last { margin-left: -2px; margin-right: -3px; }
.sep.pre { margin-left: -3px; margin-right: -2px; }
.grip { width: 2px; height: 22px; background-image: linear-gradient(#b0b0b0 50%, transparent 50%); background-size: 2px 3px; }
.sigma { width: 13px; text-align: center; font-size: 14px; margin-right: 3px; }
.tight { margin-left: -3px; }

/* main toolbar */
.toolbar { height: 29px; background: #f8f8f8; border-bottom: 2px solid #d4d4d4; display: flex; align-items: center; gap: 6px; padding: 1px 0 0 8px; white-space: nowrap; }

.combo { display: flex; height: 21px; flex: none; background: #fff; align-items: center; }
.combo.big { width: 80px; margin-right: -2px; }
.combo.c2 { width: 68px; margin-left: 4px; }
.combo.c3 { width: 68px; margin-left: 4px; }
.combo.c4 { width: 67px; margin-left: 4px; }
.cv { flex: 1; padding-left: 3px; white-space: nowrap; }
.label { width: 43px; height: 21px; background: #fff; padding: 2px 0 0 2px; flex: none; margin-left: 6px; }
.cb { width: 13px; height: 21px; background: #dcdcdc; border: 1px solid #a8a8a8; position: relative; flex: none; }
.cb::after { content: ""; position: absolute; left: 2.500px; top: 6px; width: 5px; height: 5px; border-right: 1px solid #444; border-bottom: 1px solid #444; transform: rotate(45deg); }

/* workspace */
.workspace { flex: 1; display: flex; min-height: 0; height: 628px; }
.nav { width: 200px; display: flex; flex-direction: column; margin-right: 4px; flex: none; padding-bottom: 2px; }
.list { width: 232px; flex: none; margin-right: 1px; }
.phead { height: 17px; margin-top: 1px; display: flex; align-items: center; justify-content: space-between; border: 1px solid #a0a0a0; border-radius: 2px; background: #f2f2f2; font-size: 12px; flex: none; }
.pctl { display: flex; gap: 8px; padding-right: 3px; align-items: center; }
.pin { width: 10px; height: 11px; }
.navbtn { height: 22px; margin: 0; width: 198px; border: 1px solid #a0a0a0; background: #f0f0f0; font: inherit; color: #111; padding: 2px 0 0; flex: none; }
.treetools { height: 28px; display: flex; gap: 8px; padding: 7px 0 0 8px; border-bottom: 1px solid #c8c8c8; background: #f6f6f6; flex: none; }
.tt { width: 15px; height: 15px; background: #dce8f8; border: 1px solid #a8c0e0; color: #2a6cb0; font-weight: 700; font-size: 15px; line-height: 12px; text-align: center; }
.tree { list-style: none; padding: 2px 0 0 0; flex: 1; background: #fff; overflow: hidden; border-left: 1px solid #aaa; margin: 0 0 0 2px; }
.tree li { height: 16px; display: flex; align-items: center; padding-left: 23px; gap: 5px; white-space: nowrap; position: relative; font-family: "Noto Sans CJK SC", sans-serif; }
.tree .child { padding-left: 43px; gap: 4px; }
.tree .child::before { content: ""; position: absolute; left: 14px; top: 7px; width: 28px; border-top: 1px dotted #777; }
.tree .child::after { content: ""; position: absolute; left: 14px; top: -9px; height: 16px; border-left: 1px dotted #777; }
.chev { position: absolute; left: 9px; top: 4px; width: 6px; height: 6px; border-top: 2px solid #aaa; border-right: 2px solid #aaa; transform: rotate(45deg); }
.chev.open { left: 10px; top: 2px; border-color: #444; transform: rotate(135deg); }
.fi { width: 16px; height: 16px; }
.cur { background: linear-gradient(#d4d4d4, #d4d4d4) 40px 0 / 70px 16px no-repeat; }
.listtools { height: 24px; display: flex; align-items: center; gap: 6px; padding-left: 4px; }

.main { flex: 1; display: flex; flex-direction: column; min-width: 0; }
.rows { height: 56px; flex: none; background: #f0f0f0; }
.row1 { height: 31px; display: flex; align-items: center; gap: 0; padding-left: 3px; }
.row1 .sep { margin: 0 3px 0 5px; }
.row1 > .it { margin-left: 5px; }
.tog { display: flex; align-items: center; gap: 4px; height: 23px; background: #cfe4f8; border: 1px solid #90c4f0; white-space: nowrap; flex: none; }
.t1 { width: 51px; padding-left: 3px; }
.t2 { width: 74px; padding-left: 3px; gap: 5px; }
.dimgroup { margin-left: auto; margin-right: 23px; display: flex; align-items: center; gap: 7px; height: 29px; padding: 0 6px 0 2px; border: 1px solid #dcdcdc; background: #f0f0f0; }
.row2 { height: 25px; display: flex; align-items: center; gap: 6px; padding-left: 116px; white-space: nowrap; }
.row2 > .it { gap: 3px; }
.t3 { width: 98px; padding-left: 3px; gap: 4px; height: 25px; }
.row2 > .cancel { margin-left: -6px; gap: 5px; }
.extract { margin-left: auto; padding-right: 8px; display: flex; align-items: center; gap: 6px; }
.canvas { flex: 1; background: #000; min-height: 0; }
.cad-svg .rl path { stroke: #e01818; fill: none; shape-rendering: crispEdges; }
.cad-svg .gl path, .cad-svg .gl polygon { stroke: #108010; fill: none; }
.cad-svg .gl path:first-child { shape-rendering: crispEdges; }
.cadt { fill: #d0d0d0; font-family: "Liberation Sans", sans-serif; font-size: 15px; text-anchor: middle; }

.snapbar { height: 29px; flex: none; display: flex; align-items: flex-start; background: #f0f0f0; }
.coordgroup { width: 411px; height: 27px; padding-left: 126px; display: flex; align-items: center; gap: 3px; border-right: 1px solid #ccc; white-space: nowrap; flex: none; }
.val, .unit { color: #777; }
.uy { margin-left: 4px; }
.spin { width: 12px; height: 20px; background: #e8e8e8; border: 1px solid #ccc; flex: none; position: relative; }
.spin::before, .spin::after { content: ""; position: absolute; left: 2px; border-left: 3px solid transparent; border-right: 3px solid transparent; }
.spin::before { top: 3px; border-bottom: 4px solid #666; }
.spin::after { bottom: 3px; border-top: 4px solid #666; }
.field { height: 22px; background: #fff; color: #777; text-align: right; padding: 3px 2px 0 0; flex: none; }
.f1 { width: 42px; }
.f2 { width: 52px; margin-left: 4px; }
.check { width: 13px; height: 13px; border: 1px solid #333; background: #fff; margin-right: 5px; }
.snapgroup { margin-left: 66px; width: 316px; height: 28px; display: flex; align-items: center; gap: 6px; border: 1px solid #dcdcdc; padding-left: 2px; flex: none; }
.t4 { width: 51px; padding-left: 3px; gap: 2px; margin-right: -6px; }
.snapgroup .t4 + .it { margin-left: 3px; }

/* status */
.status { height: 22px; flex: none; display: flex; align-items: center; background: #f0f0f0; border-top: 1px solid #d8d8d8; font-size: 12px; white-space: nowrap; }
.status > span { height: 20px; display: flex; align-items: center; border-right: 1px solid #d0d0d0; padding-left: 2px; flex: none; }
.mono { font-family: "Liberation Mono", monospace; font-size: 10px; }
.s1 { width: 149px; } .s2 { width: 80px; } .s3 { width: 130px; } .s4 { width: 50px; }
.s5 { width: 250px; } .s6 { width: 487px; } .s7 { width: 70px; } .status > .s8 { flex: 1; border-right: 0; }

/* taskbar */
.taskbar { height: 40px; flex: none; display: flex; align-items: stretch; background: #0b1a20; color: #fff; }
.startbtn { width: 48px; background: #000; display: flex; align-items: center; justify-content: center; flex: none; }
.searchbox { width: 344px; background: #f2f2f2; color: #222; display: flex; align-items: center; flex: none; font-size: 13px; position: relative; padding-left: 10px; }
.cortana { width: 20px; height: 20px; border: 3px solid #111; border-radius: 50%; flex: none; }
.stext { margin-left: 10px; font-size: 14px; }
.mic { width: 12px; height: 20px; margin-left: auto; margin-right: 15px; }
.tcell { display: flex; align-items: center; justify-content: center; flex: none; }
.c50 { width: 50px; } .c48 { width: 48px; }
.iesearch { width: 149px; margin: 4px 0 2px 2px; background: #3e4548; border: 1px solid #555; border-radius: 2px; display: flex; align-items: center; padding-left: 4px; flex: none; color: #b8bcbe; }
.ie { color: #2e9aee; font-size: 26px; font-family: "Liberation Sans", sans-serif; line-height: 26px; width: 19px; flex: none; margin-top: -3px; }
.iet { margin-left: 4px; }
.mag { width: 16px; height: 16px; margin-left: auto; margin-right: 7px; }
.tapp { display: flex; align-items: center; justify-content: center; flex: none; position: relative; }
.tapp::after { content: ""; position: absolute; left: 4px; right: 4px; bottom: 0; height: 3px; background: #7eb4e4; }
.a1 { width: 42px; margin-left: 5px; } .a2 { width: 43px; } .a3 { width: 43px; } .a4 { width: 41px; } .a5 { width: 40px; }
.act { background: #38474e; }
.act::after { left: 0; right: 0; }
.qm { fill: #f4e020; font-family: "Liberation Sans", sans-serif; font-size: 18px; font-weight: 700; }
.tscroll { width: 20px; background: #000; display: flex; align-items: center; justify-content: center; flex: none; }
.t60 { width: 60px; } .t66 { width: 66px; } .t32 { width: 32px; } .t22 { width: 22px; } .t24 { width: 24px; } .t26 { width: 26px; }
.cpu, .clock { flex-direction: column; line-height: 17px; font-size: 12px; white-space: nowrap; }
.zh { font-size: 13px; }
.notif { width: 18px; margin: 0 24px 0 auto; }
.slogo { display: flex; align-items: center; justify-content: center; width: 27px; height: 25px; background: #f04a24; border-radius: 6px; color: #fff; font: 700 24px/1 "Liberation Sans", sans-serif; transform: rotate(-12deg); flex: none; }
.slogo.small { width: 16px; height: 16px; font-size: 14px; border-radius: 3px; }

/* overlays */
.badge { position: absolute; left: 717px; top: -29px; width: 47px; height: 47px; border-radius: 50%; background: #f07c18; border: 1px solid #b0a090; box-shadow: 0 1px 3px rgba(0,0,0,.4); color: #fff; font: 700 12px/1 "Liberation Sans", sans-serif; text-align: center; padding-top: 30px; }
.ime { position: absolute; left: 995px; top: 17px; display: flex; align-items: center; }
.imebar { margin-left: -4px; width: 184px; height: 24px; margin-top: 3px; background: #fff; border: 1px solid #b4c8d8; display: flex; align-items: center; padding-left: 11px; gap: 6.500px; }
.imez { color: #1c74c8; font-size: 14px; width: 14px; }
.imep { color: #1c74c8; font-size: 14px; width: 14px; margin-left: 3px; font-family: "Liberation Sans", sans-serif; }
.im { width: 16px; height: 16px; }

.dialog { position: absolute; left: 105px; top: 113px; width: 456px; height: 586px; background: #f0f0f0; border: 1px solid #3a9be4; box-shadow: 0 0 14px rgba(0,0,0,.35); }
.dtitle { height: 28px; background: #fff; display: flex; align-items: center; justify-content: space-between; padding: 0 9px 0 2px; }
.dclose { width: 12px; height: 12px; }
.dgrid { margin: 2px 0 0 3px; display: grid; grid-template-columns: 221px 223px; grid-template-rows: 138px 138px; gap: 5px; }
.panel { background: #000; position: relative; }
.panel.sel { box-shadow: inset 0 0 0 3px #f00; }
.panel.large { width: 451px; height: 224px; margin: 6px 0 0 1px; }
.dfoot { display: flex; justify-content: flex-end; gap: 15px; padding: 12px 13px 0 0; }
.dbtn { width: 72px; height: 23px; background: #e1e1e1; border: 1px solid #adadad; font: inherit; color: #111; padding: 0; }

.dw path { stroke: #fff; fill: none; stroke-width: 1; }
.dw text { text-anchor: middle; font-family: "Noto Sans CJK SC", sans-serif; }
.dw .wn, .dw .gn { font-family: "Liberation Sans", sans-serif; }
.wt, .wn { fill: #f2f2f2; }
.gn { fill: #00e000; }
.rt { dominant-baseline: central; }
.f13 { font-size: 13px; } .f14 { font-size: 14px; } .f20 { font-size: 20px; } .f22 { font-size: 22px; }

.marks { position: absolute; left: 0; top: 0; pointer-events: none; }
.marks ellipse { fill: none; stroke: #0000f0; stroke-width: 6; }
```
